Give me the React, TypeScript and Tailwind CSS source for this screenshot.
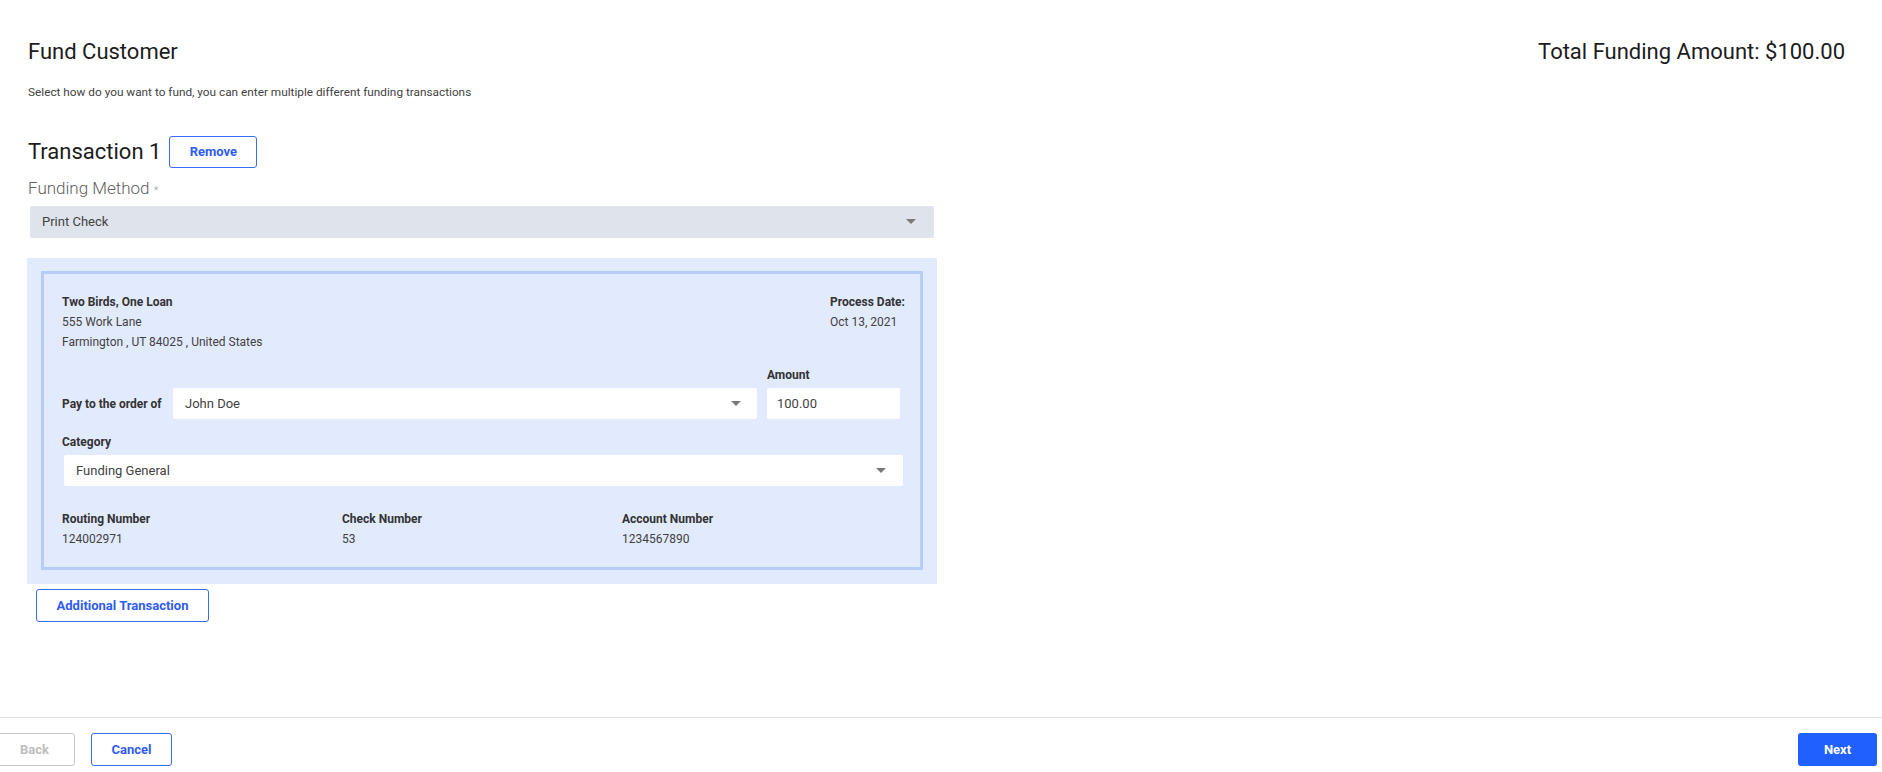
import React from "react";

function Caret() {
  return (
    <svg width="10" height="6" viewBox="0 0 10 6" className="shrink-0">
      <path d="M0 0 L10 0 L5 5 Z" fill="#7a7a7a" />
    </svg>
  );
}

function SelectBox({ value, className }: { value: string; className: string }) {
  return (
    <div className={`flex items-center justify-between rounded-[2px] pl-3 text-[13px] text-[#424242] ${className}`}>
      <span>{value}</span>
      <Caret />
    </div>
  );
}

export default function App() {
  return (
    <div
      className="flex h-[772px] w-full flex-col bg-white text-[#212121]"
      style={{ fontFamily: "Roboto, 'Liberation Sans', sans-serif" }}
    >
      <main className="flex-1 pl-[28px] pr-[37px] pt-[38px]">
        <div className="flex items-center justify-between">
          <h1 className="text-[22px] leading-[28px] text-[#1c1c1c]">Fund Customer</h1>
          <div className="text-[22px] leading-[28px] text-[#1c1c1c]">Total Funding Amount: $100.00</div>
        </div>
        <p className="mt-[18px] text-[11.8px] leading-[16px] text-[#424242]">
          Select how do you want to fund, you can enter multiple different funding transactions
        </p>

        <div className="mt-[36px] flex items-center gap-[8px]">
          <h2 className="text-[22px] leading-[32px] text-[#1c1c1c]">Transaction 1</h2>
          <button className="h-[32px] w-[88px] rounded-[3px] border border-[#3a6bf5] text-[13px] font-bold text-[#2f5cf5]">
            Remove
          </button>
        </div>

        <div className="mt-[10px] text-[17px] font-light leading-[20px] text-[#616161]">
          Funding Method <span className="text-[11px] text-[#9e9e9e]">*</span>
        </div>
        <SelectBox value="Print Check" className="mt-[5px] ml-[2px] h-[32px] w-[904px] bg-[#dfe3eb] pr-[18px]" />

        <div className="mt-[20px] ml-[-1px] w-[910px] bg-[#e2eafd] px-[14px] pb-[14px] pt-[13px]">
          <div className="border-[3px] border-[#b7cdf8] pb-[18px] pt-[18px]">
            <div className="flex justify-between pl-[18px] pr-[15px] text-[12px] leading-[20px]">
              <div>
                <div className="font-bold text-[#333333]">Two Birds, One Loan</div>
                <div className="text-[#424242]">555 Work Lane</div>
                <div className="text-[#424242]">Farmington , UT 84025 , United States</div>
              </div>
              <div>
                <div className="font-bold text-[#333333]">Process Date:</div>
                <div className="text-[#424242]">Oct 13, 2021</div>
              </div>
            </div>

            <div className="mt-[15px] flex items-end pl-[18px] pr-[20px]">
              <div className="flex h-[31px] w-[111px] items-center text-[12px] font-bold text-[#333333]">
                Pay to the order of
              </div>
              <SelectBox value="John Doe" className="h-[31px] flex-1 bg-white pr-[16px]" />
              <div className="ml-[10px] w-[133px]">
                <div className="text-[12px] font-bold leading-[16px] text-[#333333]">Amount</div>
                <div className="mt-[5px] flex h-[31px] items-center rounded-[2px] bg-white pl-[10px] text-[13px] text-[#424242]">
                  100.00
                </div>
              </div>
            </div>

            <div className="mt-[15px] pl-[18px] text-[12px] font-bold leading-[16px] text-[#333333]">Category</div>
            <div className="mt-[5px] pl-[20px] pr-[17px]">
              <SelectBox value="Funding General" className="h-[31px] bg-white pr-[17px]" />
            </div>

            <div className="mt-[23px] grid grid-cols-[280px_280px_1fr] pl-[18px] text-[12px] leading-[20px]">
              <div>
                <div className="font-bold text-[#333333]">Routing Number</div>
                <div className="text-[#424242]">124002971</div>
              </div>
              <div>
                <div className="font-bold text-[#333333]">Check Number</div>
                <div className="text-[#424242]">53</div>
              </div>
              <div>
                <div className="font-bold text-[#333333]">Account Number</div>
                <div className="text-[#424242]">1234567890</div>
              </div>
            </div>
          </div>
        </div>

        <button className="mt-[5px] ml-[8px] h-[33px] w-[173px] rounded-[3px] border border-[#3a6bf5] text-[13px] font-bold text-[#2f5cf5]">
          Additional Transaction
        </button>
      </main>

      <footer className="flex h-[55px] items-start justify-between border-t border-[#e0e0e0] pt-[15px] pr-[5px]">
        <div className="flex gap-[16px]">
          <button className="ml-[-6px] h-[33px] w-[81px] rounded-[3px] border border-[#c8c8c8] text-[13px] font-bold text-[#bdbdbd]">
            Back
          </button>
          <button className="h-[33px] w-[81px] rounded-[3px] border border-[#3a6bf5] text-[13px] font-bold text-[#2f5cf5]">
            Cancel
          </button>
        </div>
        <button className="h-[33px] w-[79px] rounded-[3px] bg-[#1f60ff] text-[13px] font-bold text-white">
          Next
        </button>
      </footer>
    </div>
  );
}
